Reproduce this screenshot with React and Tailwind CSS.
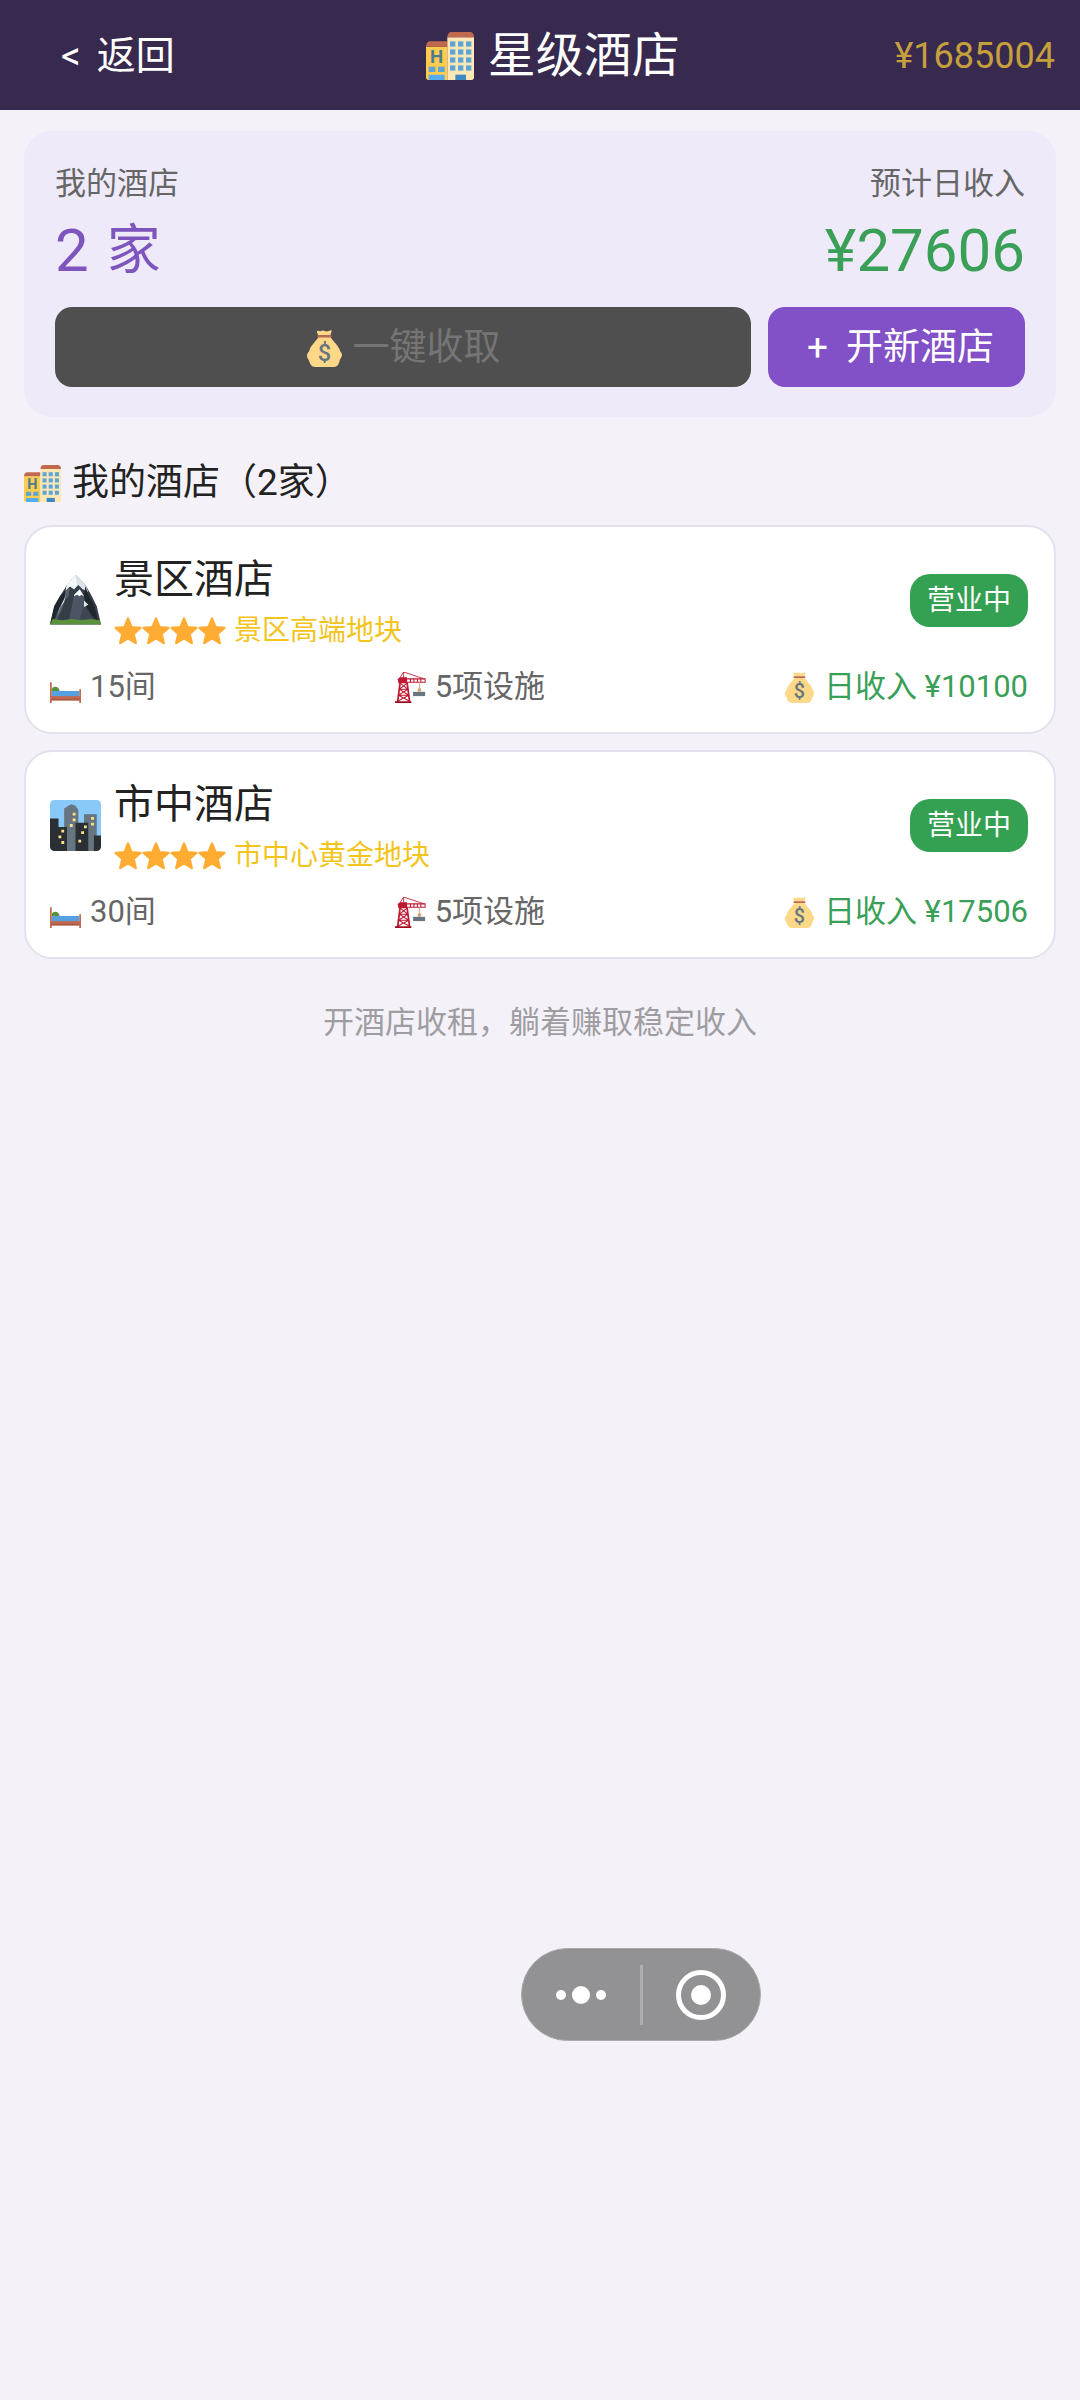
import { useState } from 'react';

const hotels = [
  { id: 1, name: '景区酒店', icon: 'mountain', stars: 4, plot: '景区高端地块', rooms: 15, facilities: 5, income: 10100 },
  { id: 2, name: '市中酒店', icon: 'city', stars: 4, plot: '市中心黄金地块', rooms: 30, facilities: 5, income: 17506 },
];

function HotelIcon({ className }) {
  return (
    <svg viewBox="0 0 36 36" className={className} aria-hidden="true">
      <path d="M0 11h16v25H2a2 2 0 0 1-2-2z" fill="#FFCC4D" />
      <path d="M3 7h13v4H0c0-2 1-4 3-4z" fill="#C1694F" />
      <path d="M16 4h20v30a2 2 0 0 1-2 2H16z" fill="#FFE8B6" />
      <path d="M19 0h14c2 0 3 2 3 4H16c0-2 1-4 3-4z" fill="#C1694F" />
      {[7, 13, 19, 25].map((y) =>
        [18, 24, 30].map((x) => <rect key={`${x}-${y}`} x={x} y={y} width="4" height="4" fill="#5DA5D6" />)
      )}
      <rect x="22" y="32" width="8" height="4" fill="#3B88C3" />
      <rect x="2" y="26" width="5" height="4" fill="#5DA5D6" />
      <rect x="9" y="26" width="5" height="4" fill="#5DA5D6" />
      <path d="M2 32h12v4H3a1 1 0 0 1-1-1z" fill="#55ACEE" />
      <text x="8" y="23" textAnchor="middle" fontSize="14" fontWeight="700" fontFamily="Roboto, sans-serif" fill="#4B7C94">H</text>
    </svg>
  );
}

function MoneyIcon({ className }) {
  return (
    <svg viewBox="0 0 36 36" className={className} aria-hidden="true">
      <path
        d="M12 7h12c2 4 8 8 9 13 0 1 2 2 2 4s-1 3-2 5c-1 4-2 7-6 7H9c-4 0-5-3-6-6-1-2-2-3-2-5s1-3 2-4c1-6 7-10 9-14z"
        fill="#FDD888"
      />
      <path d="M12 5c-1-2-2-3-1-4s2 1 4 0 2 0 3 0 2 1 4 0 3-1 3 0-1 2-1 4z" fill="#FDD888" />
      <rect x="11" y="5" width="14" height="2" rx="1" fill="#BF6952" />
      <text x="18" y="30" textAnchor="middle" fontSize="23" fontWeight="500" fontFamily="Roboto, sans-serif" fill="#67757F">$</text>
    </svg>
  );
}

function BedIcon({ className }) {
  return (
    <svg viewBox="0 0 36 36" className={className} aria-hidden="true">
      <path d="M2 21c0-3 2-4 4-4 3 0 5 2 5 5H2z" fill="#5C913B" />
      <path d="M2 22h32v7H2z" fill="#55A0E0" />
      <path d="M1 28h34v5H1z" fill="#C1694F" />
      <path d="M1 31h34v2H1z" fill="#A85A44" />
      <path d="M0 12h2v24H0zM34 20h2v16h-2z" fill="#C1694F" />
    </svg>
  );
}

function CraneIcon({ className }) {
  return (
    <svg viewBox="0 0 36 36" className={className} aria-hidden="true">
      <g fill="none" stroke="#BE1931">
        <path d="M6 12L3 35M14 12l3 23" strokeWidth="2" />
        <path d="M6 13l9 7-11 7 13 7M14 13l-9 7 11 7-13 7M5 20h10M4 27h12" strokeWidth="1.2" />
        <path d="M10 7V0l24 8M10 0L5 8" strokeWidth="1" />
        <path d="M14 8h21v4H14M18 8v4M22 8v4M26 8v4M30 8v4" strokeWidth="1.2" />
      </g>
      <path d="M3 8l3-2h8v7H4z" fill="#BE1931" />
      <path d="M0 34h19v2H0z" fill="#A0041E" />
      <path d="M28 12h1v6l2 3-2 2h-2l-1-2 2-3z" fill="#E1A26F" />
      <path d="M21 23h14v5H21z" fill="#66757F" />
    </svg>
  );
}

function MountainIcon({ className }) {
  return (
    <svg viewBox="0 0 36 36" className={className} aria-hidden="true">
      <path d="M0 35l3-13 4-7 5-8 6-7 7 7 4 7 4 8 3 13z" fill="#353D47" />
      <path d="M18 0l7 7 2 5-4-2-3-3-3 3-3-2-3 3 1-4z" fill="#DCE5EC" />
      <path d="M18 0l1 7-2 3-3-2-3 3 1-4z" fill="#F5F8FA" />
      <path d="M11 11l-1 7-5 8-2 5-3 4 3-13 4-7z" fill="#20262D" />
      <path d="M11 11l3-2-1 6-3 3-1 5-4 8-1 0 3-9 3-4z" fill="#59636F" />
      <path d="M11 15l-1 4-3 4-2 6 3-8z" fill="#E1E8ED" />
      <path d="M17 14l4-4 3 5 1 9 2 10H13l2-10z" fill="#4B5563" />
      <path d="M21 10l3 5-2-1-1 1-2-1-2 1 0-1z" fill="#F5F8FA" />
      <path d="M25 8l2 6 4 7 3 12-5-5-4-7-1-7z" fill="#20262D" />
      <path d="M24 18l3 3-2 1-1 3z" fill="#E1E8ED" />
      <path d="M21 31l3-9 3 3 4 8z" fill="#3D4652" />
      <path d="M0 35l2-4 7 1 6-1 7 1 7-1 6 1 1 3z" fill="#5C913B" />
    </svg>
  );
}

function CityIcon({ className }) {
  return (
    <svg viewBox="0 0 36 36" className={className} aria-hidden="true">
      <path d="M3 0h30a3 3 0 0 1 3 3v23l-6 6H8L0 16V3a3 3 0 0 1 3-3z" fill="#88C9F9" />
      <path d="M24 10h9v26h-9z" fill="#66757F" />
      <path d="M10 6l3-2 2-1 3 1 2 3v29H10z" fill="#66757F" />
      <path d="M0 13h6v6h6v17H3a3 3 0 0 1-3-3z" fill="#292F33" />
      <path d="M18 16h9v20h-9zM31 25h5v8a3 3 0 0 1-3 3h-2z" fill="#292F33" />
      <path
        d="M16 9h2v2h-2zM16 13h2v2h-2zM14 17h2v2h-2zM29 12h2v2h-2zM29 16h2v2h-2zM24 18h2v2h-2zM22 22h2v2h-2zM20 28h2v2h-2zM8 21h2v2H8zM6 25h2v2H6zM8 29h2v2H8z"
        fill="#FFE08A"
      />
    </svg>
  );
}

function StarIcon({ className }) {
  return (
    <svg viewBox="0 0 36 36" className={className} aria-hidden="true">
      <path
        d="M18 2l4.500 11 11.500 1-8.800 7.600L28 33.500l-10-6.300-10 6.300 2.800-11.900L2 14l11.500-1z"
        fill="#FFAC33"
        stroke="#FFAC33"
        strokeWidth="3"
        strokeLinejoin="round"
      />
    </svg>
  );
}

function HotelCard({ hotel }) {
  return (
    <li className="rounded-[28px] border-2 border-[#e4e1ef] bg-white pt-[21px] pr-[26px] pb-[23px] pl-6">
      <div className="flex items-center">
        {hotel.icon === 'mountain' ? (
          <MountainIcon className="size-[51px] shrink-0" />
        ) : (
          <CityIcon className="size-[51px] shrink-0" />
        )}
        <div className="ml-[13px] flex-1 pt-[3px]">
          <h3 className="text-[40px] leading-[58px] text-[#222222]">{hotel.name}</h3>
          <div className="flex items-center text-[28px] leading-[44px] text-[#f3c41c]">
            {Array.from({ length: hotel.stars }, (_, i) => (
              <StarIcon key={i} className="size-[28px]" />
            ))}
            <span className="ml-2">{hotel.plot}</span>
          </div>
        </div>
        <span className="rounded-[20px] bg-[#34a051] px-[17px] text-[28px] leading-[53px] text-white">营业中</span>
      </div>
      <div className="mt-3 flex items-center justify-between text-[31px] leading-[44px] text-[#666666]">
        <span className="flex items-center gap-[9px]">
          <BedIcon className="size-[31px]" />
          {hotel.rooms}间
        </span>
        <span className="flex items-center gap-[9px]">
          <CraneIcon className="size-[31px]" />
          {hotel.facilities}项设施
        </span>
        <span className="flex items-center gap-[9px] text-[#3a9f57]">
          <MoneyIcon className="size-[31px]" />
          日收入 ¥{hotel.income}
        </span>
      </div>
    </li>
  );
}

function App() {
  const [money] = useState(1685004);
  const total = hotels.reduce((sum, h) => sum + h.income, 0);

  return (
    <div className="min-h-screen bg-[#f4f2f8] font-[Roboto,'Noto_Sans_CJK_SC',sans-serif]">
      <header className="flex h-[110px] items-center justify-between bg-[#38294e] px-[25px] pt-[2px] text-white">
        <button type="button" className="flex items-center gap-4 px-9 text-[39px] leading-[58px]">
          <span>&lt;</span>
          <span>返回</span>
        </button>
        <h1 className="flex items-center gap-[14px] text-[48px] leading-[58px]">
          <HotelIcon className="size-12" />
          星级酒店
        </h1>
        <span className="text-[36px] leading-[58px] text-[#c5a03c]">¥{money}</span>
      </header>

      <main className="px-6 pt-[21px]">
        <section className="rounded-[28px] bg-[#eeeafa] px-[31px] pt-[31px] pb-[30px]">
          <div className="flex justify-between">
            <div>
              <p className="text-[31px] leading-[44px] text-[#666666]">我的酒店</p>
              <p className="flex gap-[18px] text-[54px] leading-[90px] text-[#7e54bd]">
                <span className="text-[60px]">{hotels.length}</span>
                <span>家</span>
              </p>
            </div>
            <div className="text-right">
              <p className="text-[31px] leading-[44px] text-[#666666]">预计日收入</p>
              <p className="text-[60px] leading-[90px] text-[#3a9f57]">¥{total}</p>
            </div>
          </div>
          <div className="mt-[11px] flex gap-[17px] text-[37px] leading-[44px]">
            <button
              type="button"
              disabled
              className="flex h-20 flex-1 items-center justify-center gap-[10px] rounded-[17px] bg-[#4f4f4f] pt-[2px] text-[#757575]"
            >
              <MoneyIcon className="size-[37px]" />
              一键收取
            </button>
            <button
              type="button"
              className="flex h-20 items-center justify-center gap-[10px] rounded-[17px] bg-[#8250c7] px-[31px] pt-[2px] text-white"
            >
              <span className="w-[37px] text-center">+</span>
              开新酒店
            </button>
          </div>
        </section>

        <h2 className="mt-[38px] mb-[14px] flex items-center gap-[11px] text-[37px] leading-[56px] text-[#222222]">
          <HotelIcon className="size-[37px]" />
          我的酒店（{hotels.length}家）
        </h2>

        <ul className="flex flex-col gap-4">
          {hotels.map((hotel) => (
            <HotelCard key={hotel.id} hotel={hotel} />
          ))}
        </ul>

        <p className="mt-[42px] text-center text-[31px] leading-[44px] text-[#9f9da2]">开酒店收租，躺着赚取稳定收入</p>
      </main>

      {/* floating capsule, stays above the page */}
      <div className="fixed top-[1948px] left-[521px] flex h-[93px] w-[240px] items-center rounded-full border border-[#a9a9ab] bg-[#929294]">
        <button type="button" aria-label="更多" className="flex flex-1 items-center justify-center gap-[6px]">
          <span className="size-[10px] rounded-full bg-white" />
          <span className="size-[18px] rounded-full bg-white" />
          <span className="size-[10px] rounded-full bg-white" />
        </button>
        <span className="h-[60px] w-[3px] bg-[#aeaeb0]" />
        <button type="button" aria-label="关闭" className="flex flex-1 items-center justify-center">
          <span className="flex size-[50px] items-center justify-center rounded-full border-5 border-white">
            <span className="size-5 rounded-full bg-white" />
          </span>
        </button>
      </div>
    </div>
  );
}

export default App;
